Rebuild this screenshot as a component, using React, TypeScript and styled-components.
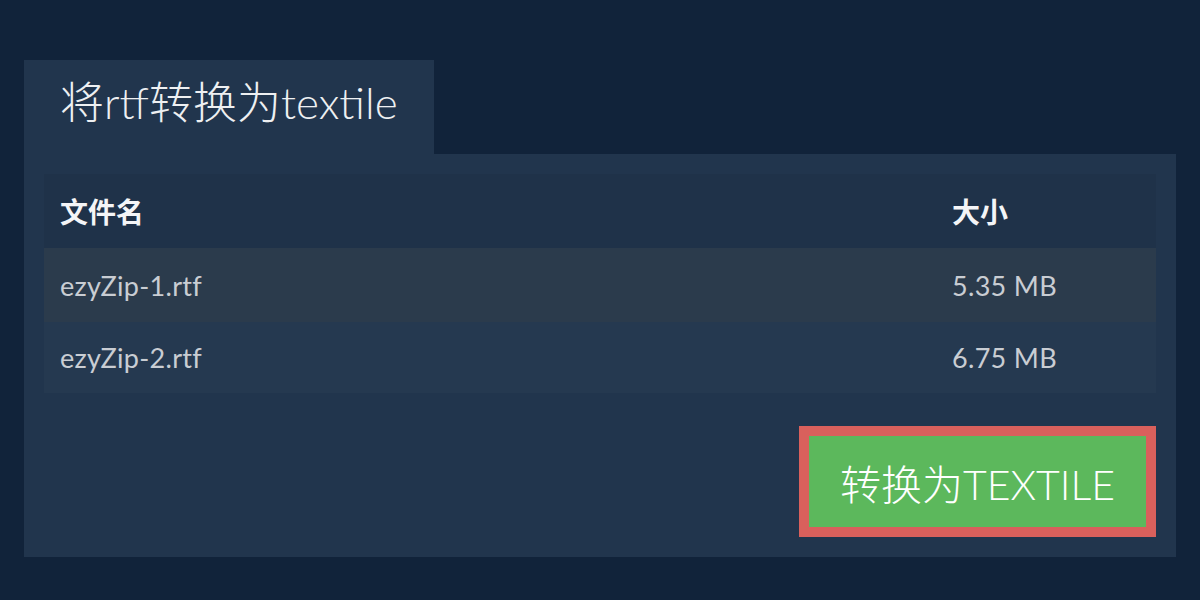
import React from 'react'
import styled, { createGlobalStyle } from 'styled-components'

const GlobalStyle = createGlobalStyle`
  html, body {
    margin: 0;
    padding: 0;
    background: #11233a;
  }
  body {
    font-family: Lato, 'Noto Sans CJK SC', sans-serif;
  }
`

const Page = styled.div`
  width: 1200px;
  height: 600px;
  box-sizing: border-box;
  padding: 60px 24px 0 24px;
  display: flex;
  flex-flow: column nowrap;
`

const Tab = styled.div`
  align-self: flex-start;
  height: 94px;
  box-sizing: border-box;
  padding: 0 36px 14px 36px;
  display: flex;
  align-items: center;
  background: #21354d;
  color: #eef0f2;
  font-size: 44px;
  font-weight: 300;
`

const Panel = styled.div`
  background: #21354d;
  padding: 20px;
  display: flex;
  flex-flow: column nowrap;
`

const Table = styled.div`
  display: flex;
  flex-flow: column nowrap;
`

const Row = styled.div<{ bg: string; height: number; head?: boolean }>`
  display: grid;
  grid-template-columns: 1fr 204px;
  align-items: center;
  height: ${(p) => p.height}px;
  padding-left: 16px;
  background: ${(p) => p.bg};
  color: ${(p) => (p.head ? '#f4f5f7' : '#c9cdd3')};
  font-size: ${(p) => (p.head ? 28 : 27)}px;
  font-weight: ${(p) => (p.head ? 700 : 400)};
  letter-spacing: ${(p) => (p.head ? 0 : 0.3)}px;
`

const ButtonRow = styled.div`
  display: flex;
  justify-content: flex-end;
  margin-top: 33px;
`

const ConvertButton = styled.button`
  height: 111px;
  width: 357px;
  box-sizing: border-box;
  border: 10px solid #d9605c;
  background: #5cb85c;
  color: #ffffff;
  font-family: Lato, 'Noto Sans CJK SC', sans-serif;
  font-size: 41px;
  font-weight: 300;
  padding: 0;
  cursor: pointer;
`

const files = [
  { name: 'ezyZip-1.rtf', size: '5.35 MB', bg: '#2b3b4c', height: 74 },
  { name: 'ezyZip-2.rtf', size: '6.75 MB', bg: '#253950', height: 71 },
]

const App: React.FunctionComponent = () => {
  return (
    <>
      <GlobalStyle />
      <Page>
        <Tab>将rtf转换为textile</Tab>
        <Panel>
          <Table>
            <Row head bg="#1f3249" height={74}>
              <span>文件名</span>
              <span>大小</span>
            </Row>
            {files.map((f) => (
              <Row key={f.name} bg={f.bg} height={f.height}>
                <span>{f.name}</span>
                <span>{f.size}</span>
              </Row>
            ))}
          </Table>
          <ButtonRow>
            <ConvertButton>转换为TEXTILE</ConvertButton>
          </ButtonRow>
        </Panel>
      </Page>
    </>
  )
}

export default App
